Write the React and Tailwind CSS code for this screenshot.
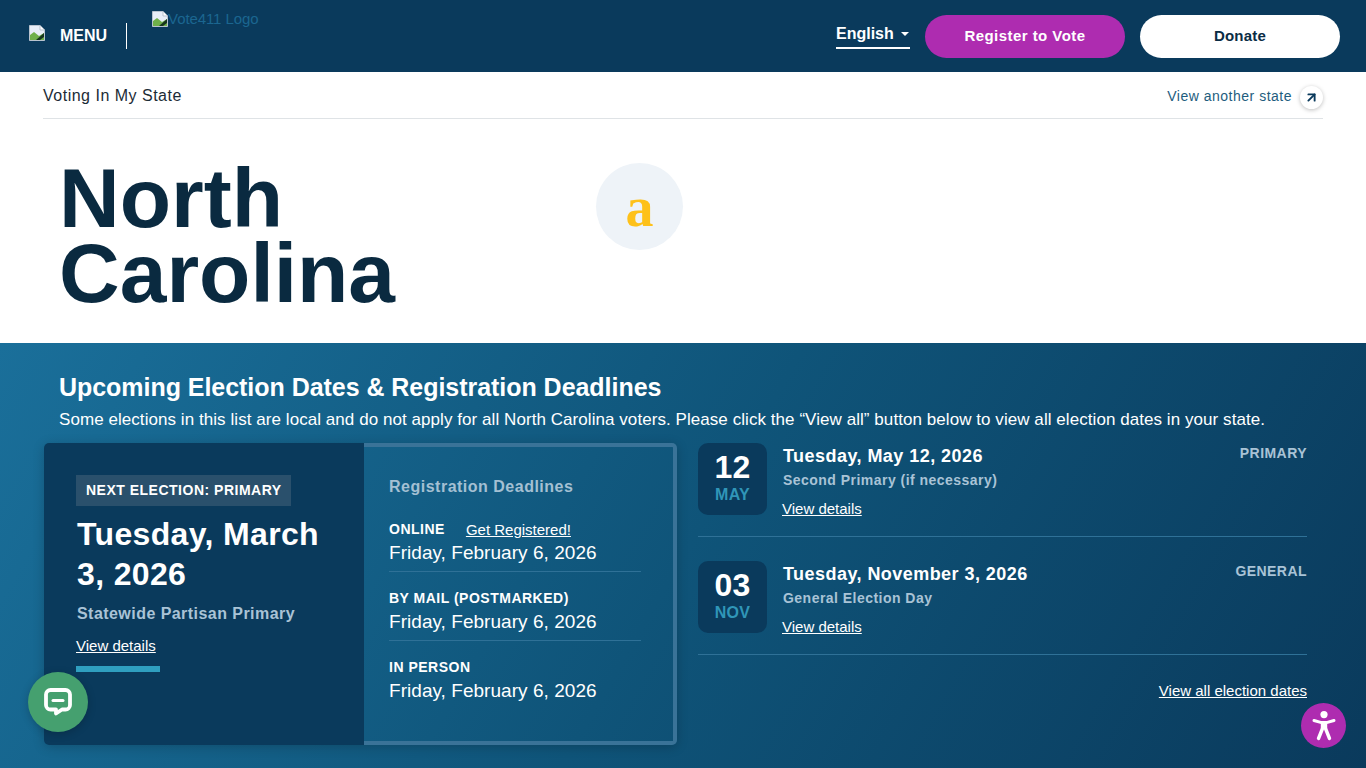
import { ArrowUpRight } from 'lucide-react';

const BrokenImage = () => (
  <svg width="16" height="16" viewBox="0 0 16 16" className="shrink-0">
    <path d="M0.5 0.5H11L15.5 5V15.5H0.5Z" fill="#e8eef8" stroke="#b9c3cf" />
    <path d="M1 15V10L5 7L10 11L15 8V15Z" fill="#6fb04a" />
    <path d="M7 15L15 8V12L11 15Z" fill="#17351f" />
    <path d="M11 0.5V5H15.5" fill="#fff" stroke="#b9c3cf" />
  </svg>
);

const ChatIcon = () => (
  <svg width="28" height="28" viewBox="0 0 28 28">
    <path
      d="M6.5 2H21.5C24 2 26 4 26 6.5V17C26 19.5 24 21.5 21.5 21.5H18L12 25.5V21.5H6.5C4 21.5 2 19.5 2 17V6.5C2 4 4 2 6.5 2Z"
      fill="none"
      stroke="#fff"
      strokeWidth="3.8"
      strokeLinejoin="round"
    />
    <rect x="7.5" y="11" width="13" height="3" rx="1.5" fill="#fff" />
  </svg>
);

const AccessIcon = () => (
  <svg width="24" height="30" viewBox="0 0 24 30" fill="none" stroke="#fff" strokeLinecap="round" strokeLinejoin="round">
    <circle cx="12" cy="3.6" r="3.6" fill="#fff" stroke="none" />
    <path d="M2 9.5L9.5 11.6H14.5L22 9.5" strokeWidth="3" />
    <path d="M12 12V17.5" strokeWidth="6.4" strokeLinecap="butt" />
    <path d="M10.5 17.5L6.5 27.5M13.5 17.5L17.5 27.5" strokeWidth="3.4" />
  </svg>
);

const deadlines = [
  { label: 'ONLINE', link: 'Get Registered!' },
  { label: 'BY MAIL (POSTMARKED)' },
  { label: 'IN PERSON' },
];

const elections = [
  { day: '12', month: 'MAY', date: 'Tuesday, May 12, 2026', name: 'Second Primary (if necessary)', type: 'PRIMARY' },
  { day: '03', month: 'NOV', date: 'Tuesday, November 3, 2026', name: 'General Election Day', type: 'GENERAL' },
];

export default function App() {
  return (
    <div className="relative h-[768px] overflow-hidden bg-white font-['Liberation_Sans',Arial,sans-serif]">
      {/* top bar */}
      <header className="flex h-[72px] items-start bg-[#0a3a5c] pl-[29px] pr-[26px]">
        <div className="mt-[23px] flex h-[26px] items-center border-r border-white pr-[19px]">
          <span className="mb-[6px]"><BrokenImage /></span>
          <span className="ml-[15px] text-[16px] font-bold text-white">MENU</span>
        </div>
        <div className="ml-[25px] mt-[10px] flex items-center">
          <BrokenImage />
          <span className="text-[15px] leading-[17px] tracking-[-0.1px] text-[#1b6690]">Vote411 Logo</span>
        </div>
        <div className="ml-auto mt-[15px] flex items-start">
          <div className="flex h-[34px] w-[74px] items-center justify-between border-b-2 border-white pt-[6px] text-[16px] font-bold text-white">
            English
            <span className="mr-[1px] h-0 w-0 border-x-[4px] border-t-[4px] border-x-transparent border-t-white" />
          </div>
          <button className="ml-[15px] h-[43px] w-[200px] rounded-full bg-[#ae2cb0] text-[15px] font-bold tracking-[0.45px] text-white">
            Register to Vote
          </button>
          <button className="ml-[15px] h-[43px] w-[200px] rounded-full bg-white text-[15px] font-bold tracking-[0.2px] text-[#0a2c44]">
            Donate
          </button>
        </div>
      </header>

      {/* state header */}
      <section className="h-[271px] px-[43px]">
        <div className="flex h-[47px] items-center justify-between border-b border-[#dfe3e6] pt-[1px]">
          <span className="text-[16px] tracking-[0.5px] text-[#1c2b36]">Voting In My State</span>
          <div className="flex items-center pt-[1px]">
            <span className="text-[14px] tracking-[0.5px] text-[#1e5d7e]">View another state</span>
            <span className="ml-[8px] mt-[2px] flex h-[23px] w-[23px] items-center justify-center rounded-full bg-white shadow-[0_1px_4px_rgba(0,0,0,0.25)]">
              <ArrowUpRight size={15} strokeWidth={3} color="#0a3a5c" />
            </span>
          </div>
        </div>
        <div className="flex items-start pl-[16px]">
          <h1 className="mt-[42px] w-[537px] text-[84px] font-bold leading-[75px] text-[#0a2a40]">
            North
            <br />
            Carolina
          </h1>
          <div className="mt-[44px] flex h-[87px] w-[87px] items-center justify-center rounded-full bg-[#eef3f8] font-['Liberation_Serif',serif] text-[56px] font-bold leading-none text-[#fec11a]">
            a
          </div>
        </div>
      </section>

      {/* elections */}
      <section className="h-[425px] bg-[linear-gradient(120deg,#1a6f9a_0%,#0f5479_50%,#0a3a5c_100%)] pl-[44px] pr-[59px] pt-[30px]">
        <div className="pl-[15px]">
          <h2 className="text-[25px] font-bold leading-[28px] tracking-[-0.04px] text-white">
            Upcoming Election Dates &amp; Registration Deadlines
          </h2>
          <p className="mt-[9px] text-[17px] leading-[20px] tracking-[0.06px] text-white">
            Some elections in this list are local and do not apply for all North Carolina voters. Please click the “View all” button below to view all election dates in your state.
          </p>
        </div>

        <div className="mt-[13px] flex">
          <div className="flex h-[302px] w-[633px] shrink-0 rounded-[5px] shadow-[0_2px_12px_rgba(0,0,0,0.2)]">
            <div className="w-[320px] shrink-0 rounded-l-[5px] bg-[#0a3a5c] pl-[32px] pr-[30px] pt-[32px]">
              <span className="inline-block h-[31px] w-[215px] bg-[#2a506c] pl-[10px] text-[14px] font-bold leading-[30px] tracking-[0.5px] text-white">
                NEXT ELECTION: PRIMARY
              </span>
              <div className="ml-[1px] mt-[8px] text-[32px] font-bold leading-[40px] tracking-[0.35px] text-white">
                Tuesday, March 3, 2026
              </div>
              <div className="ml-[1px] mt-[10px] text-[16px] font-bold leading-[20px] tracking-[0.45px] text-[#a9c3d6]">
                Statewide Partisan Primary
              </div>
              <a className="mt-[13px] block w-fit text-[15px] leading-[18px] text-white underline">View details</a>
              <div className="mt-[11px] h-[6px] w-[84px] bg-[#2f9fc0]" />
            </div>
            <div className="flex-1 rounded-r-[5px] border-y-4 border-r-4 border-[#3a7398] pl-[25px] pr-[32px] pt-[30px]">
              <div className="text-[16px] font-bold leading-[20px] tracking-[0.5px] text-[#a4c0d3]">Registration Deadlines</div>
              <div className="mt-[6px]">
                {deadlines.map((d, i) => (
                  <div key={d.label} className={i < 2 ? 'h-[69px] border-b border-[#2f7197] pt-[18px]' : 'pt-[18px]'}>
                    <div className="flex items-center text-[14px] leading-[17px] text-white">
                      <span className="font-bold tracking-[0.5px]">{d.label}</span>
                      {d.link && <a className="ml-[21px] text-[15px] underline">{d.link}</a>}
                    </div>
                    <div className="mt-[4px] text-[19px] leading-[21px] tracking-[0.04px] text-white">Friday, February 6, 2026</div>
                  </div>
                ))}
              </div>
            </div>
          </div>

          <div className="ml-[21px] flex-1">
            {elections.map((e) => (
              <div key={e.day} className="mb-[24px] flex h-[94px] border-b border-[#2f7197]">
                <div className="flex h-[72px] w-[69px] shrink-0 flex-col items-center rounded-[10px] bg-[#0a3a5c] pt-[7px]">
                  <span className="text-[32px] font-bold leading-[35px] tracking-[0.3px] text-white">{e.day}</span>
                  <span className="text-[16px] font-bold leading-[20px] tracking-[0.3px] text-[#3096b8]">{e.month}</span>
                </div>
                <div className="ml-[16px] flex-1 pt-[1px]">
                  <div className="text-[18px] font-bold leading-[24px] tracking-[0.45px] text-white">{e.date}</div>
                  <div className="mt-[3px] text-[14px] font-bold leading-[18px] tracking-[0.47px] text-[#a9c3d6]">{e.name}</div>
                  <a className="-ml-[1px] mt-[12px] block w-fit text-[15px] leading-[16px] text-white underline">View details</a>
                </div>
                <span className="text-[14px] font-bold leading-[20px] tracking-[0.45px] text-[#a9c3d6]">{e.type}</span>
              </div>
            ))}
            <div className="mt-[27px] flex justify-end">
              <a className="text-[15px] leading-[18px] text-white underline">View all election dates</a>
            </div>
          </div>
        </div>
      </section>

      {/* floating widgets */}
      <button className="absolute bottom-[36px] left-[28px] flex h-[60px] w-[60px] items-center justify-center rounded-full bg-[#45a06f] shadow-[0_2px_8px_rgba(0,0,0,0.2)]">
        <ChatIcon />
      </button>
      <button className="absolute bottom-[20px] right-[20px] flex h-[45px] w-[45px] items-center justify-center rounded-full bg-[#ae2cb0]">
        <AccessIcon />
      </button>
    </div>
  );
}
